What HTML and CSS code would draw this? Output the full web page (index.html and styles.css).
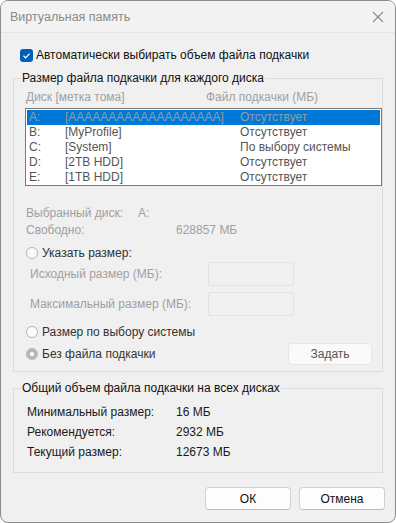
FILE: index.html
```html
<!DOCTYPE html>
<html lang="ru">
<head>
  <meta charset="UTF-8">
  <title>Виртуальная память</title>
  <link rel="stylesheet" href="styles.css">
</head>
<body>
  <div class="window">
    <div class="titlebar">
      <span class="title">Виртуальная память</span>
      <svg class="close" width="12" height="12" viewBox="0 0 12 12">
        <path d="M1 1 L11 11 M11 1 L1 11" stroke="#8a8a8a" stroke-width="1.1" fill="none"/>
      </svg>
    </div>

    <div class="content">
      <label class="check-row">
        <span class="checkbox">
          <svg width="13" height="13" viewBox="0 0 13 13">
            <path d="M3.5 6.8 L5.6 8.8 L9.6 4.6" stroke="#fff" stroke-width="1.2" fill="none"/>
          </svg>
        </span>
        Автоматически выбирать объем файла подкачки
      </label>

      <fieldset class="group group-disks">
        <legend>Размер файла подкачки для каждого диска</legend>
        <div class="list-head disabled">
          <span>Диск [метка тома]</span>
          <span>Файл подкачки (МБ)</span>
        </div>
        <div class="listbox">
          <div class="list-row selected"><span>A:</span><span>[AAAAAAAAAAAAAAAAAAA]</span><span>Отсутствует</span></div>
          <div class="list-row"><span>B:</span><span>[MyProfile]</span><span>Отсутствует</span></div>
          <div class="list-row"><span>C:</span><span>[System]</span><span>По выбору системы</span></div>
          <div class="list-row"><span>D:</span><span>[2TB HDD]</span><span>Отсутствует</span></div>
          <div class="list-row"><span>E:</span><span>[1TB HDD]</span><span>Отсутствует</span></div>
        </div>

        <div class="info-row disabled first"><span class="info-label">Выбранный диск:</span><span class="drive">A:</span></div>
        <div class="info-row disabled"><span class="info-label wide">Свободно:</span><span>628857 МБ</span></div>

        <div class="radio-row r-custom"><span class="radio"></span>Указать размер:</div>
        <div class="size-row disabled"><span class="size-label">Исходный размер (МБ):</span><span class="textbox"></span></div>
        <div class="size-row second disabled"><span class="size-label">Максимальный размер (МБ):</span><span class="textbox"></span></div>
        <div class="radio-row r-system"><span class="radio"></span>Размер по выбору системы</div>
        <div class="radio-row r-none">
          <span class="radio checked"></span>Без файла подкачки
          <button class="btn btn-set">Задать</button>
        </div>
      </fieldset>

      <fieldset class="group group-total">
        <legend>Общий объем файла подкачки на всех дисках</legend>
        <div class="total-row"><span class="total-label">Минимальный размер:</span><span>16 МБ</span></div>
        <div class="total-row"><span class="total-label">Рекомендуется:</span><span>2932 МБ</span></div>
        <div class="total-row"><span class="total-label">Текущий размер:</span><span>12673 МБ</span></div>
      </fieldset>

      <div class="actions">
        <button class="btn btn-main">ОК</button>
        <button class="btn btn-main">Отмена</button>
      </div>
    </div>
  </div>
</body>
</html>
```

FILE: styles.css
```css
:root {
  --window-bg: #f0f0f0;
  --title-bg: #f3f3f3;
  --text: #1a1a1a;
  --muted: #a0a0a0;
  --group-border: #dcdcdc;
  --accent: #005fb8;
  --select: #0078d7;
}

body {
  margin: 0;
  background: #ffffff;
  font-family: "Liberation Sans", Arial, sans-serif;
  font-size: 12px;
  color: var(--text);
}

.window {
  box-sizing: border-box;
  width: 396px;
  height: 523px;
  border: 1px solid #8c8c8c;
  border-radius: 8px;
  background: var(--window-bg);
  overflow: hidden;
}

.titlebar {
  box-sizing: border-box;
  height: 32px;
  background: var(--title-bg);
  border-bottom: 1px solid #e4e4e4;
  display: flex;
  align-items: center;
  justify-content: space-between;
  padding: 0 9px 0 9px;
}

.title {
  color: #8a8a8a;
  font-size: 12.5px;
}

.close {
  margin-right: 2px;
}

.content {
  padding: 14px 0 0 12px;
}

.check-row {
  display: flex;
  align-items: center;
  height: 16px;
  margin-left: 7px;
  color: #111;
}

.checkbox {
  width: 13px;
  height: 13px;
  border-radius: 3px;
  background: var(--accent);
  margin-right: 3px;
  display: flex;
}

.group {
  box-sizing: border-box;
  width: 370px;
  margin: 7px 0 0 0;
  border: 1px solid var(--group-border);
  padding: 3px 0 6px 11px;
  min-width: 0;
}

.group legend {
  padding: 0 1px;
  margin-left: -4px;
  line-height: 16px;
  color: #111;
}

.disabled {
  color: var(--muted);
}

.list-head {
  display: flex;
  height: 16px;
  line-height: 16px;
  padding-left: 1px;
}

.list-head span:first-child {
  width: 180px;
}

.listbox {
  box-sizing: border-box;
  height: 78px;
  margin: 3px 0 0 0;
  border: 1px solid #7a7a7a;
  background: #ffffff;
  padding: 1px 1px 0 1px;
}

.list-row {
  display: grid;
  grid-template-columns: 36px 175px 1fr;
  height: 15px;
  line-height: 15px;
  padding-left: 2px;
  color: #555;
}

.list-row.selected {
  background: var(--select);
  color: #9a9a9a;
}

.info-row {
  display: flex;
  height: 16px;
  line-height: 16px;
  margin-top: 1px;
  padding-left: 1px;
}

.info-row.first {
  margin-top: 19px;
}

.info-label {
  width: 112px;
}

.info-label.wide {
  width: 150px;
}

.radio-row {
  display: flex;
  align-items: center;
  height: 16px;
  padding-left: 1px;
  color: #333;
}

.r-custom { margin-top: 7px; }
.r-system { margin-top: 8px; }

.r-none {
  height: 22px;
  margin-top: 3px;
}

.radio {
  box-sizing: border-box;
  width: 12px;
  height: 12px;
  border: 1px solid #b4b4b4;
  border-radius: 50%;
  background: #fafafa;
  margin-right: 4px;
}

.radio.checked {
  background: #b8b8b8;
  border-color: #b8b8b8;
  display: flex;
  align-items: center;
  justify-content: center;
}

.radio.checked::after {
  content: "";
  width: 4px;
  height: 4px;
  border-radius: 50%;
  background: #ffffff;
}

.size-row {
  display: flex;
  align-items: center;
  height: 24px;
  margin-top: 1px;
  padding-left: 5px;
}

.size-row.second {
  margin-top: 6px;
}

.size-label {
  width: 178px;
}

.textbox {
  box-sizing: border-box;
  width: 86px;
  height: 24px;
  border: 1px solid #e2e2e2;
  border-radius: 2px;
  background: var(--window-bg);
}

.btn {
  font-family: inherit;
  font-size: 12px;
  box-sizing: border-box;
  border-radius: 4px;
  cursor: pointer;
}

.btn-set {
  margin-left: auto;
  margin-right: 10px;
  width: 84px;
  height: 22px;
  border: 1px solid #e6e6e6;
  background: #fafafa;
  color: #555;
}

.group-total {
  margin-top: 8px;
  padding: 6px 0 10px 13px;
}

.group-total legend {
  margin-left: -6px;
}

.total-row {
  display: flex;
  height: 20px;
  line-height: 20px;
}

.total-label {
  width: 149px;
}

.actions {
  display: flex;
  justify-content: flex-end;
  gap: 8px;
  margin-top: 14px;
  padding-right: 10px;
}

.btn-main {
  width: 86px;
  height: 23px;
  border: 1px solid #d0d0d0;
  border-bottom-color: #bcbcbc;
  background: #fdfdfd;
  color: #111;
}
```
